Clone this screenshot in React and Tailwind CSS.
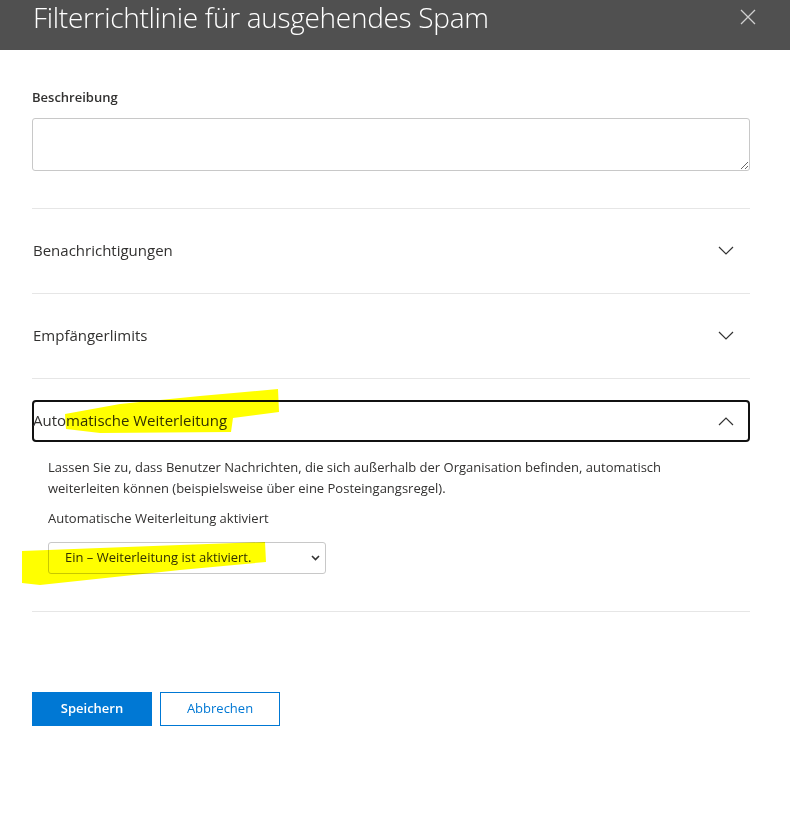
import { useState } from "react"

function Chevron({ up }) {
  return (
    <svg width="16" height="10" viewBox="0 0 16 10" fill="none" className="shrink-0">
      <path
        d={up ? "M1 9 L8 2 L15 9" : "M1 1 L8 8 L15 1"}
        stroke="#333"
        strokeWidth="1.2"
      />
    </svg>
  )
}

function Section({ title, open, children }) {
  return (
    <div className="border-t border-[#e6e6e6]">
      {open ? (
        <div className="pt-[21px]">
          <div className="h-[42px] flex items-center justify-between border-2 border-[#111] rounded-[4px] pr-[14px]">
            <span className="text-[15px] text-[#323130] -ml-[1px]">{title}</span>
            <Chevron up />
          </div>
          {children}
        </div>
      ) : (
        <div className="h-[84px] flex items-center justify-between pr-[16px]">
          <span className="text-[15px] text-[#323130] ml-[1px]">{title}</span>
          <Chevron />
        </div>
      )}
    </div>
  )
}

export default function App() {
  const [forward, setForward] = useState("on")

  return (
    <div className="relative w-[790px] h-[834px] bg-white font-['Segoe_UI','Open_Sans',sans-serif] overflow-hidden">
      <div className="h-[50px] bg-[#505050] flex items-start justify-between pl-[33px] pr-[34px]">
        <h1 className="text-[28px] leading-[34px] font-light text-white tracking-[-0.3px]">
          Filterrichtlinie für ausgehendes Spam
        </h1>
        <svg width="16" height="16" viewBox="0 0 16 16" className="mt-[9px]">
          <path d="M1 1 L15 15 M15 1 L1 15" stroke="#d0d0d0" strokeWidth="1.3" />
        </svg>
      </div>

      <div className="px-[32px] w-[782px]">
        <div className="pt-[38px] text-[13px] text-[#323130] font-semibold">Beschreibung</div>
        <textarea className="mt-[10px] block w-full h-[53px] border border-[#c8c8c8] rounded-[3px] outline-none resize-y" />

        <div className="mt-[37px]">
          <Section title="Benachrichtigungen" />
          <Section title="Empfängerlimits" />
          <Section title="Automatische Weiterleitung" open>
            <div className="pl-[16px] pt-[15px] pb-[37px]">
              <p className="max-w-[640px] text-[13px] leading-[21px] text-[#323130]">
                Lassen Sie zu, dass Benutzer Nachrichten, die sich außerhalb der Organisation befinden, automatisch
                weiterleiten können (beispielsweise über eine Posteingangsregel).
              </p>
              <div className="mt-[10px] text-[13px] text-[#323130]">Automatische Weiterleitung aktiviert</div>
              <div className="relative mt-[14px] w-[278px]">
                <select
                  value={forward}
                  onChange={(e) => setForward(e.target.value)}
                  className="appearance-none w-full h-[32px] border border-[#c8c8c8] rounded-[3px] pl-[16px] text-[13px] text-[#323130] bg-white outline-none"
                >
                  <option value="on">Ein – Weiterleitung ist aktiviert.</option>
                  <option value="off">Aus – Weiterleitung ist deaktiviert.</option>
                  <option value="auto">Automatisch – vom System gesteuert.</option>
                </select>
                <svg width="9" height="6" viewBox="0 0 9 6" className="absolute right-[6px] top-[13px] pointer-events-none">
                  <path d="M1 1 L4.5 4.5 L8 1" stroke="#333" strokeWidth="1.6" fill="none" />
                </svg>
              </div>
            </div>
          </Section>
          <div className="border-t border-[#e6e6e6]" />
        </div>

        <div className="mt-[80px] flex gap-[8px]">
          <button className="w-[120px] h-[34px] bg-[#0078d4] text-white text-[13px] font-semibold">Speichern</button>
          <button className="w-[120px] h-[34px] border border-[#0078d4] text-[#0078d4] text-[13px] bg-white">Abbrechen</button>
        </div>
      </div>

      {/* marker strokes */}
      <svg width="790" height="834" className="absolute inset-0 pointer-events-none mix-blend-multiply">
        <polygon fill="#ffff00" points="65,414 120,404 200,396 278,389 279,412 233,418 231,432 100,433 66,429" />
        <polygon fill="#ffff00" points="22,551 100,548 180,545 265,542 266,562 180,570 40,585 22,583" />
      </svg>
    </div>
  )
}
